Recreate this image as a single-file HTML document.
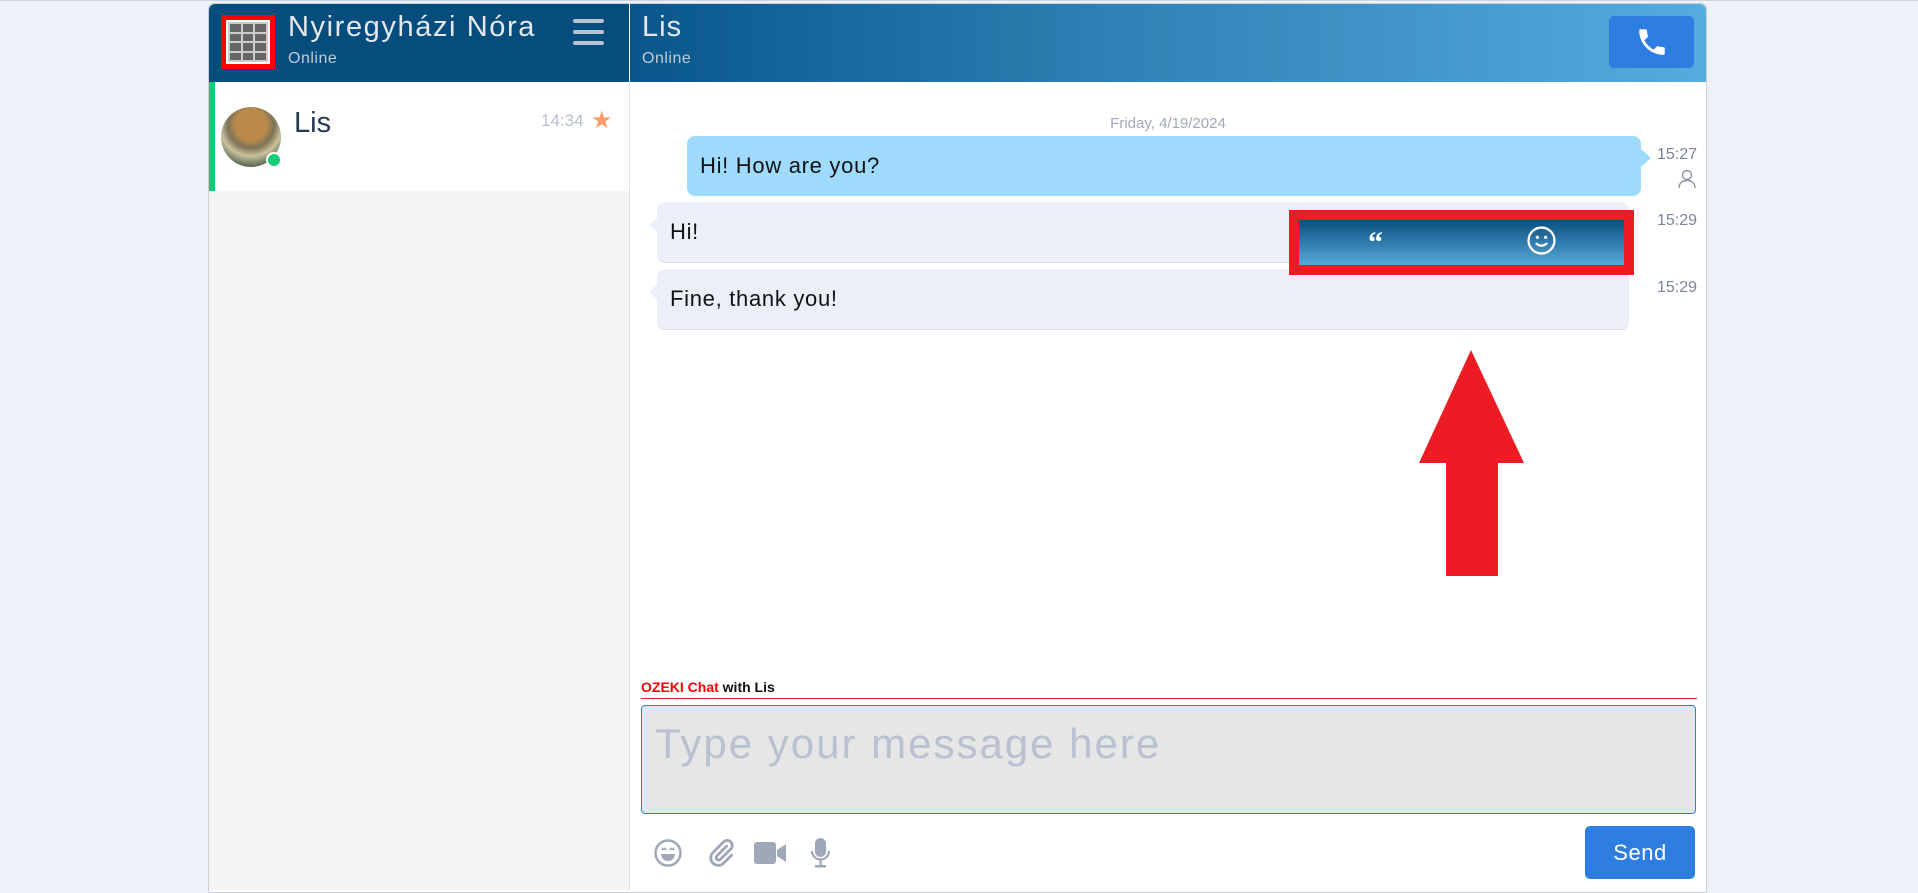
<!DOCTYPE html>
<html><head><meta charset="utf-8"><style>
*{box-sizing:border-box;margin:0;padding:0}
body{width:1918px;height:889px;background:#edf1f8;font-family:"Liberation Sans",sans-serif;position:relative;overflow:hidden;border-top:1px solid #d0d4da}
.abs{position:absolute}
</style></head><body>
<div class="abs" style="left:208px;top:2px;width:1499px;height:890px;background:#fff;border:1px solid #c8d0dc;border-radius:6px 6px 0 0;overflow:hidden">
</div>
<div class="abs" style="left:209px;top:3px;width:420px;height:78px;background:#054d7c;border-radius:6px 0 0 0"></div>
<div class="abs" style="left:221px;top:14px;width:54px;height:54px;background:#f00;padding:5px">
 <div style="width:44px;height:44px;background:#ccc;border:2px solid #fff;display:grid;grid-template-columns:repeat(3,1fr);gap:2px;padding:2px">
  <div style="background:#666"></div><div style="background:#666"></div><div style="background:#666"></div><div style="background:#666"></div><div style="background:#666"></div><div style="background:#666"></div><div style="background:#666"></div><div style="background:#666"></div><div style="background:#666"></div><div style="background:#666"></div><div style="background:#666"></div><div style="background:#666"></div>
 </div>
</div>
<div class="abs" style="left:288px;top:10px;color:#e6e8ec;font-size:29px;letter-spacing:1.6px">Nyiregyházi Nóra</div>
<div class="abs" style="left:288px;top:49px;color:#c2cbd6;font-size:16px;letter-spacing:0.5px">Online</div>
<div class="abs" style="left:573px;top:18px;width:31px;height:4px;background:#b8c2d0;border-radius:2px"></div>
<div class="abs" style="left:573px;top:29px;width:31px;height:4px;background:#b8c2d0;border-radius:2px"></div>
<div class="abs" style="left:573px;top:40px;width:31px;height:4px;background:#b8c2d0;border-radius:2px"></div>
<div class="abs" style="left:630px;top:3px;width:1076px;height:78px;background:linear-gradient(90deg,#08568a,#2f82b3 45%,#55acdd);border-radius:0 6px 0 0"></div>
<div class="abs" style="left:642px;top:10px;color:#e6e8ec;font-size:29px;letter-spacing:1px">Lis</div>
<div class="abs" style="left:642px;top:49px;color:#c2cbd6;font-size:16px;letter-spacing:0.5px">Online</div>
<div class="abs" style="left:1609px;top:15px;width:85px;height:52px;background:#2e7de1;border-radius:5px"></div>
<svg class="abs" style="left:1635px;top:24px" width="34" height="34" viewBox="0 0 24 24"><path fill="#fff" d="M6.6 10.8c1.4 2.8 3.8 5.1 6.6 6.6l2.2-2.2c.3-.3.7-.4 1-.2 1.1.4 2.3.6 3.6.6.6 0 1 .4 1 1V20c0 .6-.4 1-1 1C10.6 21 3 13.4 3 4c0-.6.4-1 1-1h3.5c.6 0 1 .4 1 1 0 1.3.2 2.5.6 3.6.1.3 0 .7-.2 1z"/></svg>
<div class="abs" style="left:629px;top:81px;width:1px;height:808px;background:#dde2ea"></div>
<div class="abs" style="left:209px;top:81px;width:420px;height:808px;background:#f5f5f5"></div>
<div class="abs" style="left:209px;top:81px;width:420px;height:109px;background:#fff"></div>
<div class="abs" style="left:209px;top:81px;width:6px;height:109px;background:#12cc78"></div>
<div class="abs" style="left:221px;top:106px;width:60px;height:60px;border-radius:50%;background:radial-gradient(circle at 50% 30%,#b98a4a 0 30%,#7d7258 45%,#c8c29a 60%,#5a6a58 80%)"></div>
<div class="abs" style="left:266px;top:151px;width:16px;height:16px;border-radius:50%;background:#12cc78;border:2px solid #fff"></div>
<div class="abs" style="left:294px;top:106px;color:#273a55;font-size:29px">Lis</div>
<div class="abs" style="left:541px;top:110px;color:#b8c0ce;font-size:17px">14:34</div>
<div class="abs" style="left:591px;top:105px;color:#ff9a6a;font-size:24px">★</div>
<div class="abs" style="left:1068px;top:114px;width:200px;text-align:center;color:#a2a8b8;font-size:15px">Friday, 4/19/2024</div>
<div class="abs" style="left:687px;top:135px;width:954px;height:60px;background:#9fdbfc;border-radius:8px"></div>
<div class="abs" style="left:1641px;top:148px;width:0;height:0;border-top:9px solid transparent;border-bottom:9px solid transparent;border-left:10px solid #9fdbfc"></div>
<div class="abs" style="left:700px;top:152px;font-size:22px;color:#111;letter-spacing:0.7px">Hi! How are you?</div>
<div class="abs" style="left:1657px;top:145px;color:#7b8596;font-size:16px">15:27</div>
<svg class="abs" style="left:1677px;top:168px" width="20" height="20" viewBox="0 0 20 20"><circle cx="10" cy="6" r="4.5" fill="none" stroke="#8a94a4" stroke-width="1.4"/><path d="M2 19c0-5 3.5-7.5 8-7.5s8 2.5 8 7.5" fill="none" stroke="#8a94a4" stroke-width="1.4"/></svg>
<div class="abs" style="left:657px;top:201px;width:972px;height:61px;background:#ebf0f8;border-radius:8px;border-bottom:1px solid #d8dee8"></div>
<div class="abs" style="left:649px;top:216px;border-top:8px solid transparent;border-bottom:8px solid transparent;border-right:9px solid #ebf0f8"></div>
<div class="abs" style="left:670px;top:218px;font-size:22px;color:#111;letter-spacing:0.7px">Hi!</div>
<div class="abs" style="left:1657px;top:211px;color:#7b8596;font-size:16px">15:29</div>
<div class="abs" style="left:657px;top:268px;width:972px;height:61px;background:#ebf0f8;border-radius:8px;border-bottom:1px solid #d8dee8"></div>
<div class="abs" style="left:649px;top:283px;border-top:8px solid transparent;border-bottom:8px solid transparent;border-right:9px solid #ebf0f8"></div>
<div class="abs" style="left:670px;top:285px;font-size:22px;color:#111;letter-spacing:0.7px">Fine, thank you!</div>
<div class="abs" style="left:1657px;top:278px;color:#7b8596;font-size:16px">15:29</div>
<div class="abs" style="left:1289px;top:209px;width:345px;height:65px;background:#ed1c24;padding:10px"><div style="width:100%;height:100%;background:linear-gradient(#0a4f80,#55a9d8)"></div></div>
<div class="abs" style="left:1368px;top:225px;color:#fff;font-size:30px;font-weight:bold;font-family:'Liberation Serif',serif">“</div>
<svg class="abs" style="left:1527px;top:225px" width="29" height="29" viewBox="0 0 28 28"><circle cx="14" cy="14" r="12.5" fill="none" stroke="#fff" stroke-width="2.2"/><circle cx="10" cy="11" r="1.6" fill="#fff"/><circle cx="18" cy="11" r="1.6" fill="#fff"/><path d="M8.5 16.5q5.5 5 11 0" fill="none" stroke="#fff" stroke-width="2.2"/></svg>
<svg class="abs" style="left:1419px;top:349px" width="106" height="227"><polygon points="52,0 105,113 79,113 79,226 27,226 27,113 0,113" fill="#ed1c24"/></svg>
<div class="abs" style="left:641px;top:678px;font-size:14px;font-weight:bold;color:#111"><span style="color:#f00">OZEKI Chat</span> with Lis</div>
<div class="abs" style="left:641px;top:697px;width:1056px;height:1px;background:#e31e1e"></div>
<div class="abs" style="left:641px;top:704px;width:1055px;height:109px;background:#e6e6e6;border:1px solid #2e7de1;border-radius:4px"></div>
<div class="abs" style="left:655px;top:719px;font-size:42px;color:#b9c1d0;letter-spacing:2px">Type your message here</div>
<svg class="abs" style="left:654px;top:838px" width="28" height="28" viewBox="0 0 28 28"><circle cx="14" cy="14" r="12.5" fill="none" stroke="#9ea8b8" stroke-width="2.5"/><path d="M7 15h14q-1 7-7 7t-7-7z" fill="#9ea8b8"/><path d="M8 11q2-3 4 0M16 11q2-3 4 0" fill="none" stroke="#9ea8b8" stroke-width="2"/></svg>
<svg class="abs" style="left:706px;top:837px" width="30" height="30" viewBox="0 0 24 24"><path d="M16.5 6.5l-8 8a2 2 0 0 0 2.8 2.8l8.5-8.5a4 4 0 0 0-5.7-5.7L5.6 11.6a6 6 0 0 0 8.5 8.5l6.4-6.4" fill="none" stroke="#9ea8b8" stroke-width="2.3" stroke-linecap="round"/></svg>
<svg class="abs" style="left:754px;top:840px" width="33" height="24" viewBox="0 0 33 24"><rect x="0" y="1" width="22" height="22" rx="3" fill="#9ea8b8"/><path d="M23 9l9-6v18l-9-6z" fill="#9ea8b8"/></svg>
<svg class="abs" style="left:810px;top:837px" width="21" height="30" viewBox="0 0 21 30"><rect x="5" y="0" width="11" height="19" rx="5.5" fill="#9ea8b8"/><path d="M2 13a8.5 8.5 0 0 0 17 0" fill="none" stroke="#9ea8b8" stroke-width="2.2"/><rect x="9.4" y="21" width="2.2" height="6" fill="#9ea8b8"/><rect x="5" y="27" width="11" height="2.5" fill="#9ea8b8"/></svg>
<div class="abs" style="left:1585px;top:825px;width:110px;height:53px;background:#2e7de1;border-radius:5px;color:#fff;font-size:22px;text-align:center;line-height:53px;letter-spacing:0.5px">Send</div>
</body></html>
